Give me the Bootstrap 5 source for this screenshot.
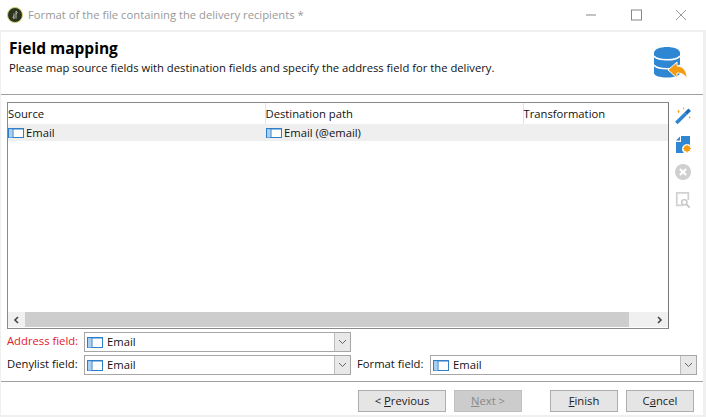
<!DOCTYPE html>
<html lang="en">
<head>
    <meta charset="UTF-8">
    <meta name="viewport" content="width=device-width, initial-scale=1.0">
    <title>Field mapping</title>
    <link rel="stylesheet" href="https://cdn.jsdelivr.net/npm/bootstrap@5.3.0/dist/css/bootstrap.min.css">
    <style>
        html, body { height: 100%; overflow: hidden; }
        body { font-family: "Open Sans", "Noto Sans", sans-serif; font-size: 11.25px; color: #111; background: #f0f0f0; }
        .dlg-window { width: 706px; height: 417px; }
        .dlg-title { height: 30px; background: #fff; color: #999; padding-left: 7px; }
        .dlg-title-text { margin-left: 5px; }
        .dlg-winbtns { margin-left: auto; }
        .dlg-winbtns svg { display: block; }
        .dlg-body { margin: 2px 0 0 1px; width: 702px; height: 383px; background: #fff; }
        .dlg-head { height: 63px; border-bottom: 1px solid #a0a0a0; padding: 7px 15px 0 8px; }
        .dlg-head h1 { font-family: "Open Sans", sans-serif; font-size: 15.5px; font-weight: 700; line-height: 18px; margin: 0; color: #000; }
        .dlg-head p { margin: 3px 0 0; line-height: 15px; color: #111; }
        .dlg-logo { margin-top: 8px; flex-shrink: 0; }
        .dlg-main { height: 227px; margin: 7px 7px 0 6px; }
        .map-frame { width: 662px; height: 227px; border: 1px solid #8a8a8a; border-right-color: #777; background: #fff; }
        .map-table { table-layout: fixed; width: 100%; margin: 0; }
        .map-table th, .map-table td { padding: 0; font-weight: 400; border: 0; line-height: 17px; white-space: nowrap; background: transparent; color: #111; font-size: 11.25px; }
        .map-table th { height: 21px; vertical-align: middle; border-left: 1px solid #e4e4e4; }
        .map-table th:first-child { border-left: 0; }
        .map-table td { height: 17px; background: #efefef; vertical-align: middle; }
        .map-table td + td { padding-left: 1px; }
        .map-col-a { width: 257px; }
        .map-col-b { width: 258px; }
        .map-scroll { height: 15px; background: #f0f0f0; margin-top: auto; margin-bottom: 1px; }
        .map-arrow { width: 17px; height: 15px; }
        .map-thumb { width: 604px; background: #cdcdcd; }
        .map-side { width: 26px; padding-left: 6px; padding-top: 5px; gap: 10px; }
        .map-side svg { display: block; }
        .fld-ico { flex: none; margin-right: 2px; }
        .map-form { margin: 3px 0 0 6px; }
        .map-row { margin-bottom: 3px; }
        .map-label { width: 77px; line-height: 18px; white-space: nowrap; margin-bottom: 2px; }
        .map-label-req { color: #e2202a; }
        .map-label-wide { width: 73px; margin-left: 6px; }
        .map-combo { width: 267px; height: 20px; border: 1px solid #a6a6a6; background: #fff; padding-left: 2px; }
        .map-combo-txt { margin-left: 4px; }
        .map-drop { width: 16px; margin-left: auto; background: #e8e8e8; border-left: 1px solid #bdbdbd; height: 100%; }
        .map-foot { border-top: 1px solid #a0a0a0; margin-top: 6px; padding: 8px 9px 0 0; }
        .dlg-btn { width: 68px; height: 22px; padding: 0; border: 1px solid #adadad; border-radius: 0; background: #e5e5e5; color: #222; font-size: 11.25px; line-height: 20px; box-shadow: none; }
        .dlg-btn-wide { width: 88px; }
        .dlg-btn-gap { margin-left: 28px; }
        .dlg-btn:disabled { background: #ccc; border-color: #bfbfbf; color: #888; opacity: 1; }
    </style>
</head>
<body>
    <div class="dlg-window d-flex flex-column">
        <div class="dlg-title d-flex align-items-center">
            <svg width="16" height="16" viewBox="0 0 16 16"><circle cx="8" cy="8" r="7.5" fill="#2c3320" stroke="#c9d36a"/><path d="M9 4v7.5M9 4.3c1.4.5 1.6 2 .2 2.6M7 6.5V12M7 11.5c-1.2-.4-1.4-1.8-.2-2.4" fill="none" stroke="#b8bcae"/></svg>
            <span class="dlg-title-text">Format of the file containing the delivery recipients *</span>
            <div class="dlg-winbtns d-flex align-items-center">
                <svg width="45" height="16" viewBox="0 0 45 16"><path d="M0 8h10" stroke="#888"/></svg>
                <svg width="45" height="16" viewBox="0 0 45 16"><rect x=".5" y="3" width="10" height="10" fill="none" stroke="#888"/></svg>
                <svg width="30" height="16" viewBox="0 0 30 16"><path d="M0 3l10 10M10 3L0 13" stroke="#999" fill="none"/></svg>
            </div>
        </div>
        <div class="dlg-body d-flex flex-column">
            <div class="dlg-head d-flex justify-content-between">
                <div>
                    <h1>Field mapping</h1>
                    <p>Please map source fields with destination fields and specify the address field for the delivery.</p>
                </div>
                <svg class="dlg-logo" width="34" height="32" viewBox="0 0 34 32">
                    <path d="M0 6c0-8 26-8 26 0v20c0 6-26 6-26 0z" fill="#2f86d2"/>
                    <path d="M0 9c3 5 23 5 26 0M0 18c3 5 23 5 26 0" fill="none" stroke="#fff" stroke-width="1.6"/>
                    <path d="M14 23l9-8v4c6 0 10 5 10 12-3-4-6-5-10-5v5z" fill="#f39c12" stroke="#fff"/>
                </svg>
            </div>
            <div class="dlg-main d-flex">
                <div class="map-frame d-flex flex-column">
                    <table class="table map-table">
                        <colgroup><col class="map-col-a"><col class="map-col-b"><col></colgroup>
                        <thead>
                            <tr><th>Source</th><th>Destination path</th><th>Transformation</th></tr>
                        </thead>
                        <tbody>
                            <tr>
                                <td><span class="d-flex align-items-center"><svg class="fld-ico" width="16" height="10" viewBox="0 0 16 10"><rect x=".5" y=".5" width="15" height="9" fill="#fff" stroke="#2f7fc8"/><path d="M1 1h14" stroke="#2f7fc8"/><rect x="1" y="1.5" width="3.5" height="8" fill="#a9d0f0"/><path d="M5 1v9" stroke="#2f7fc8"/></svg>Email</span></td>
                                <td><span class="d-flex align-items-center"><svg class="fld-ico" width="16" height="10" viewBox="0 0 16 10"><rect x=".5" y=".5" width="15" height="9" fill="#fff" stroke="#2f7fc8"/><path d="M1 1h14" stroke="#2f7fc8"/><rect x="1" y="1.5" width="3.5" height="8" fill="#a9d0f0"/><path d="M5 1v9" stroke="#2f7fc8"/></svg>Email (@email)</span></td>
                                <td></td>
                            </tr>
                        </tbody>
                    </table>
                    <div class="map-scroll d-flex">
                        <div class="map-arrow d-flex align-items-center justify-content-center"><svg width="7" height="8" viewBox="0 0 7 8"><path d="M5 1L2 4l3 3" fill="none" stroke="#444" stroke-width="1.6"/></svg></div>
                        <div class="map-thumb"></div>
                        <div class="map-arrow ms-auto d-flex align-items-center justify-content-center"><svg width="7" height="8" viewBox="0 0 7 8"><path d="M2 1l3 3-3 3" fill="none" stroke="#444" stroke-width="1.6"/></svg></div>
                    </div>
                </div>
                <div class="map-side d-flex flex-column">
                    <svg width="16" height="18" viewBox="0 0 18 20"><path d="M1.5 18L12 7.5" stroke="#2f86d2" stroke-width="4"/><path d="M12 7.5L16.5 3" stroke="#1f6fb8" stroke-width="4"/><path d="M4 3l1.2 2-1.2 2-1.2-2zM16.5 10l1 1.6-1 1.6-1-1.6zM9.5 0l.8 1.4-.8 1.4-.8-1.4z" fill="#f39c12"/></svg>
                    <svg width="16" height="18" viewBox="0 0 16 18"><path d="M6 1h9v9a4.5 4.5 0 0 0-6 8H1V7h5z" fill="#2f86d2"/><path d="M1 5.5L5 1.5v4z" fill="#2f86d2"/><circle cx="12" cy="13.5" r="3" fill="#f39c12"/><path d="M12 9.5v8M8 13.5h8M9.2 10.7l5.6 5.6M14.8 10.7l-5.6 5.6" stroke="#f39c12"/></svg>
                    <svg width="16" height="18" viewBox="0 0 18 20"><circle cx="9" cy="10" r="9" fill="#cfcfcf"/><path d="M5.5 6.5l7 7M12.5 6.5l-7 7" stroke="#fff" stroke-width="2.4"/></svg>
                    <svg width="16" height="18" viewBox="0 0 18 20"><path d="M9 16H2V2h13v8" fill="none" stroke="#d2d2d2" stroke-width="2"/><circle cx="10.5" cy="12.5" r="3" fill="#fff" stroke="#c4c4c4" stroke-width="1.5"/><path d="M13 15l3.5 3.5" stroke="#c4c4c4" stroke-width="2"/></svg>
                </div>
            </div>
            <div class="map-form">
                <div class="d-flex align-items-center map-row">
                    <label class="map-label map-label-req">Address field:</label>
                    <div class="map-combo d-flex align-items-center"><svg width="16" height="11" viewBox="0 0 16 11"><rect x=".5" y=".5" width="15" height="10" fill="#fff" stroke="#2f7fc8"/><path d="M1 1h14" stroke="#2f7fc8"/><rect x="1" y="1.5" width="3.5" height="9" fill="#a9d0f0"/><path d="M5 1v9" stroke="#2f7fc8"/></svg><span class="map-combo-txt">Email</span><div class="map-drop d-flex align-items-center justify-content-center"><svg width="9" height="6" viewBox="0 0 9 6"><path d="M1 1l3.5 3.5L8 1" fill="none" stroke="#666"/></svg></div></div>
                </div>
                <div class="d-flex align-items-center">
                    <label class="map-label">Denylist field:</label>
                    <div class="map-combo d-flex align-items-center"><svg width="16" height="11" viewBox="0 0 16 11"><rect x=".5" y=".5" width="15" height="10" fill="#fff" stroke="#2f7fc8"/><path d="M1 1h14" stroke="#2f7fc8"/><rect x="1" y="1.5" width="3.5" height="9" fill="#a9d0f0"/><path d="M5 1v9" stroke="#2f7fc8"/></svg><span class="map-combo-txt">Email</span><div class="map-drop d-flex align-items-center justify-content-center"><svg width="9" height="6" viewBox="0 0 9 6"><path d="M1 1l3.5 3.5L8 1" fill="none" stroke="#666"/></svg></div></div>
                    <label class="map-label map-label-wide">Format field:</label>
                    <div class="map-combo d-flex align-items-center"><svg width="16" height="11" viewBox="0 0 16 11"><rect x=".5" y=".5" width="15" height="10" fill="#fff" stroke="#2f7fc8"/><path d="M1 1h14" stroke="#2f7fc8"/><rect x="1" y="1.5" width="3.5" height="9" fill="#a9d0f0"/><path d="M5 1v9" stroke="#2f7fc8"/></svg><span class="map-combo-txt">Email</span><div class="map-drop d-flex align-items-center justify-content-center"><svg width="9" height="6" viewBox="0 0 9 6"><path d="M1 1l3.5 3.5L8 1" fill="none" stroke="#666"/></svg></div></div>
                </div>
            </div>
            <div class="map-foot d-flex justify-content-end">
                <button class="btn dlg-btn dlg-btn-wide" type="button">&lt; <u>P</u>revious</button>
                <button class="btn dlg-btn ms-2" type="button" disabled><u>N</u>ext &gt;</button>
                <button class="btn dlg-btn dlg-btn-gap me-2" type="button"><u>F</u>inish</button>
                <button class="btn dlg-btn" type="button">C<u>a</u>ncel</button>
            </div>
        </div>
    </div>
    <script src="https://cdn.jsdelivr.net/npm/bootstrap@5.3.0/dist/js/bootstrap.bundle.min.js"></script>
</body>
</html>
